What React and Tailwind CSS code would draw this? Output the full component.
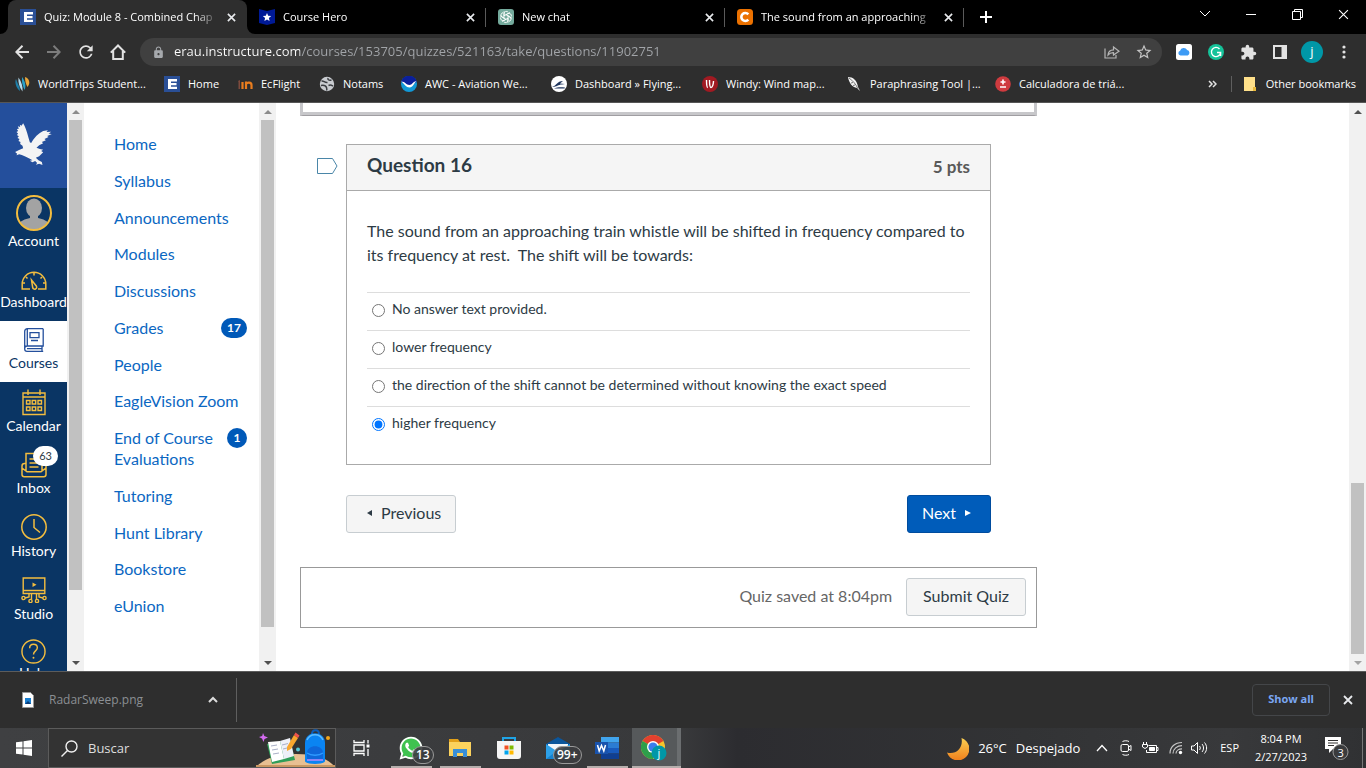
import React from "react";
import { FaWhatsapp } from "react-icons/fa";
import { MdExtension, MdLock, MdStarBorder, MdRefresh } from "react-icons/md";

const ui = "font-['Open_Sans','Noto_Sans',sans-serif]";

function Cross({ size = 10, width = 2, color = "#e8eaed" }) {
  return (
    <svg width={size} height={size} viewBox="0 0 10 10" stroke={color} strokeWidth={width} fill="none" aria-hidden="true">
      <path d="M1 1l8 8M9 1l-8 8" />
    </svg>
  );
}

function EMark() {
  return (
    <svg width="16" height="16" viewBox="0 0 16 16" className="shrink-0" aria-hidden="true">
      <rect width="16" height="16" fill="#2a4f96" />
      <path d="M4 3h9v2.4H7v1.5h5.5v2.3H7v1.5h6V13H4z" fill="#fff" />
    </svg>
  );
}

function HeroMark() {
  return (
    <svg width="16" height="16" viewBox="0 0 16 16" className="shrink-0" aria-hidden="true">
      <path d="M0 0l8 2 8-2v14l-8 2-8-2z" fill="#001a96" />
      <path d="M8 4l1.200 2.800 3 .3-2.300 2 .7 3L8 10.500l-2.600 1.600.7-3-2.300-2 3-.3z" fill="#fff" />
    </svg>
  );
}

function KnotMark() {
  return (
    <svg width="16" height="16" viewBox="0 0 32 32" className="shrink-0" aria-hidden="true">
      <rect width="32" height="32" rx="6" fill="#74aa9c" />
      <g fill="none" stroke="#fff" strokeWidth="1.7">
        {[0, 60, 120, 180, 240, 300].map((a) => (
          <path key={a} transform={`rotate(${a} 16 16)`} d="M12 19V9.500a4.800 4.800 0 0 1 8.500-3M16 11.500l8-4.500" />
        ))}
      </g>
    </svg>
  );
}

function CheggMark() {
  return (
    <svg width="16" height="16" viewBox="0 0 16 16" className="shrink-0" aria-hidden="true">
      <rect width="16" height="16" rx="3.500" fill="#eb7100" />
      <path d="M11.300 5.300A4 4 0 1 0 11.300 10.700" fill="none" stroke="#fff" strokeWidth="2.600" />
    </svg>
  );
}

const tabs = [
  { title: "Quiz: Module 8 - Combined Chap", Icon: EMark, active: true },
  { title: "Course Hero", Icon: HeroMark },
  { title: "New chat", Icon: KnotMark },
  { title: "The sound from an approaching", Icon: CheggMark },
];

function TabStrip() {
  return (
    <div className="flex h-[34px] shrink-0 items-stretch bg-black pl-2 text-xs text-white">
      <div className="flex min-w-0 flex-1" role="tablist">
        {tabs.map(({ title, Icon, active }) => (
          <div
            key={title}
            className={
              "relative flex w-[239px] min-w-0 items-center pl-3 pr-[11px] " +
              (active ? "rounded-t-lg bg-[#2e2e2e]" : "")
            }
          >
            <button role="tab" aria-selected={!!active} className="flex min-w-0 flex-1 items-center gap-2 text-left">
              <Icon />
              <span className="min-w-0 flex-1 overflow-hidden whitespace-nowrap text-[11px] [mask-image:linear-gradient(to_right,#000_calc(100%-24px),transparent)]">
                {title}
              </span>
            </button>
            <button aria-label={"Close " + title} className="ml-2 shrink-0">
              <Cross size={9} width={1.800} />
            </button>
            {active ? (
              <>
                <svg className="absolute -left-2 bottom-0" width="8" height="8" aria-hidden="true"><path d="M8 0v8H0A8 8 0 0 0 8 0" fill="#2e2e2e" /></svg>
                <svg className="absolute -right-2 bottom-0" width="8" height="8" aria-hidden="true"><path d="M0 0v8h8A8 8 0 0 1 0 0" fill="#2e2e2e" /></svg>
              </>
            ) : (
              <span className="absolute right-0 top-2 h-[19px] w-px bg-[#5a5a5a]" />
            )}
          </div>
        ))}
        <button aria-label="New tab" className="ml-4 self-center">
          <svg width="12" height="12" stroke="#fff" strokeWidth="2" aria-hidden="true"><path d="M6 0v12M0 6h12" /></svg>
        </button>
      </div>
      <div className="flex h-7 shrink-0 text-white">
        <button aria-label="Search tabs" className="flex w-[46px] items-center justify-center">
          <svg width="12" height="8" fill="none" stroke="currentColor" aria-hidden="true"><path d="M1 1l5 5 5-5" /></svg>
        </button>
        <button aria-label="Minimize" className="flex w-[46px] items-center justify-center">
          <svg width="10" height="10" fill="currentColor" aria-hidden="true"><path d="M0 5h10v1H0z" /></svg>
        </button>
        <button aria-label="Restore" className="flex w-[46px] items-center justify-center">
          <svg width="11" height="11" fill="none" stroke="currentColor" aria-hidden="true"><path d="M.5 2.500h8v8h-8zM2.500 2.500v-2h8v8h-2" /></svg>
        </button>
        <button aria-label="Close window" className="flex w-[46px] items-center justify-center">
          <Cross size={11} width={1} color="#fff" />
        </button>
      </div>
    </div>
  );
}

function Toolbar() {
  const cell = "flex w-8 shrink-0 items-center justify-center";
  return (
    <div className="flex h-9 shrink-0 items-center bg-[#2e2e2e] pl-[6px] pr-[6px] text-[#e2e2e2]">
      <button aria-label="Back" className={cell}>
        <svg width="14" height="14" fill="none" stroke="currentColor" strokeWidth="2" aria-hidden="true"><path d="M14 7H1.500M7.500.800L1.300 7l6.200 6.200" /></svg>
      </button>
      <button aria-label="Forward" className={cell + " text-[#7c7c7c]"}>
        <svg width="14" height="14" fill="none" stroke="currentColor" strokeWidth="2" aria-hidden="true"><path d="M0 7h12.500M6.500.800L12.700 7l-6.200 6.200" /></svg>
      </button>
      <button aria-label="Reload" className={cell}><MdRefresh size={20} /></button>
      <button aria-label="Home page" className={cell}>
        <svg width="16" height="16" fill="none" stroke="currentColor" strokeWidth="2" aria-hidden="true"><path d="M.8 8.600L8 1.500l7.200 7.100M3.200 7v8h9.600V7" /></svg>
      </button>
      <div className="ml-[6px] flex h-7 min-w-0 flex-1 items-center rounded-full bg-[#404040] pl-3 pr-[2px]">
        <MdLock size={13} className="mr-[9px] shrink-0 text-[#a6a9ad]" aria-hidden="true" />
        <input
          aria-label="Address and search bar"
          readOnly
          value="erau.instructure.com/courses/153705/quizzes/521163/take/questions/11902751"
          className="min-w-0 flex-1 bg-[linear-gradient(to_right,#ffffff_126px,#a2a5a9_126px)] bg-clip-text text-[13px] text-transparent outline-none"
        />
        <button aria-label="Share this page" className={cell + " text-[#b5b5b5]"}>
          <svg width="16" height="16" fill="none" stroke="currentColor" strokeWidth="1.200" aria-hidden="true"><path d="M1 4.500V14h11v-3M4 11c.3-3.500 2.500-5 5.500-5.100V3L15 7.200 9.500 11V8.700C7.300 8.600 5.500 9.200 4 11z" /></svg>
        </button>
        <button aria-label="Bookmark this page" className={cell + " text-[#c4c4c4]"}><MdStarBorder size={18} /></button>
      </div>
      <button aria-label="iCloud" className={cell + " ml-[6px]"}>
        <svg width="16" height="16" aria-hidden="true"><rect width="16" height="16" rx="2.500" fill="#fff" /><path d="M4.500 11.500a2.400 2.400 0 0 1-.4-4.700 3.800 3.800 0 0 1 7-.8 2.900 2.900 0 0 1 .6 5.500z" fill="#3d9bf5" /></svg>
      </button>
      <button aria-label="Grammarly" className={cell}>
        <svg width="16" height="16" aria-hidden="true"><circle cx="8" cy="8" r="8" fill="#15c39a" /><path d="M11.500 5A4.600 4.600 0 1 0 12.600 8.500H9M12.600 8.500v3.500" fill="none" stroke="#fff" strokeWidth="1.400" /></svg>
      </button>
      <button aria-label="Extensions" className={cell}><MdExtension size={17} /></button>
      <button aria-label="Side panel" className={cell}>
        <svg width="14" height="14" aria-hidden="true"><path fillRule="evenodd" d="M0 0h14v14H0zM2 2v10h6.500V2z" fill="currentColor" /></svg>
      </button>
      <button aria-label="Profile" className={cell}>
        <span className="flex size-[22px] items-center justify-center rounded-full bg-[#0097a7] pb-px text-[13px] leading-none text-white">j</span>
      </button>
      <button aria-label="Browser menu" className={cell}>
        <svg width="4" height="14" fill="currentColor" aria-hidden="true"><circle cx="2" cy="2" r="1.600" /><circle cx="2" cy="7" r="1.600" /><circle cx="2" cy="12" r="1.600" /></svg>
      </button>
    </div>
  );
}

function Glyph({ children }) {
  return <svg width="16" height="16" viewBox="0 0 16 16" className="shrink-0" aria-hidden="true">{children}</svg>;
}

const bookmarks = [
  { w: "w-[134px]", label: "WorldTrips Student...", icon: <Glyph><path d="M2 3c-1.500 3 0 9 4 12L5.500 11C4 8 3 6 2 3z" fill="#1f7fa8" /><path d="M4.500 1.500C4 6 5 11 8.500 15.500c.5-5-1-10-4-14z" fill="#b9dcec" /><path d="M8 1c-.5 5 .8 9 2.500 13 2-4 .5-9-2.500-13z" fill="#2aa2c9" /><path d="M11 1c0 4 .8 7 2.500 10C17 7 15 2 11 1z" fill="#e9a63a" /></Glyph> },
  { w: "w-[57px]", label: "Home", icon: <EMark /> },
  { w: "w-[66px]", label: "EcFlight", icon: <Glyph><path d="M1 5l2-1v9H1.500V6z" fill="#7d4a3d" /><path d="M5.500 6v7" fill="none" stroke="#e97d1e" strokeWidth="2.200" /><path d="M9 13V5.500M9 8c1-2 5.500-2.200 5.500 1v4" fill="none" stroke="#e97d1e" strokeWidth="2.200" /></Glyph> },
  { w: "w-[66px]", label: "Notams", icon: <Glyph><circle cx="8" cy="8" r="7.200" fill="#c9ccd0" /><path d="M2.500 5c2.500-.5 3 2 6 1.500M9 2c-.5 2 1 2.500 3.500 2M2 9.500c3-.5 5 .5 5.500 2s0 2 .5 3M9.500 9.500c2-1 3.500 0 4.500.5" stroke="#3a3d41" strokeWidth="1.500" fill="none" /></Glyph> },
  { w: "w-[134px]", label: "AWC - Aviation We...", icon: <Glyph><circle cx="8" cy="8" r="8" fill="#1298d6" /><path d="M.2 6A8 8 0 0 1 15.800 6C13 6 12 11 8.500 11S4 7 .2 6z" fill="#0b1f9c" /><path d="M.3 5.500c3.700 0 5 3.500 8 3.500s4-4 7.200-4c-2.500 2-3.500 6.500-7 6.500S3.500 8 .3 5.500z" fill="#fff" /></Glyph> },
  { w: "w-[135px]", label: "Dashboard » Flying...", icon: <Glyph><circle cx="8" cy="8" r="8" fill="#fff" /><path d="M1 11c4-1 5-6 11-6L9 7.500l5 .5-3 .5C7 8.500 6 11 1 11zM3 12.500c3-1.500 7-1.500 11-1l-.5 1z" fill="#1f355e" /></Glyph> },
  { w: "w-[128px]", label: "Windy: Wind map...", icon: <Glyph><circle cx="8" cy="8" r="8" fill="#a11a22" /><path d="M4.500 4c0 5 .3 7.500 1.300 7.500M7.500 4c0 4 .3 7.500 1.500 7.500 1.500 0 2.500-3.500 2.500-6.500" fill="none" stroke="#fff" strokeWidth="1.400" /></Glyph> },
  { w: "w-[133px]", label: "Paraphrasing Tool |...", icon: <Glyph><path d="M2 1c5 0 9 3 10 10l2 4-3-3C6 11 3 7 2 1z" fill="#f3f3f3" /><path d="M3 2c4 3 7 6 9 11M5 7l2-.5M7 9.500l2-.5" stroke="#777" fill="none" /></Glyph> },
  { w: "w-[133px]", label: "Calculadora de triá...", icon: <Glyph><circle cx="8" cy="8" r="7.800" fill="#cf3b3f" /><path d="M8 3.500v5M5.500 6h5M5 11h6" stroke="#fff" strokeWidth="1.600" /></Glyph> },
];

function BookmarksBar() {
  return (
    <nav aria-label="Bookmarks" className="flex h-[33px] shrink-0 items-center border-b border-[#565656] bg-[#2e2e2e] pb-1 pl-[14px] pr-[10px] text-[11px] text-white">
      <div className="flex h-full min-w-0 flex-1 items-center gap-4 overflow-hidden">
        {bookmarks.map((b) => (
          <a key={b.label} href="#" className={"flex shrink-0 items-center gap-2 whitespace-nowrap " + b.w}>
            {b.icon}
            {b.label}
          </a>
        ))}
      </div>
      <button aria-label="More bookmarks" className="mr-[14px]">
        <svg width="9" height="8" fill="none" stroke="#e2e2e2" strokeWidth="1.500" aria-hidden="true"><path d="M1 1l3 3-3 3M5 1l3 3-3 3" /></svg>
      </button>
      <span className="mr-3 h-4 w-px bg-[#5f5f5f]" />
      <a href="#" className="flex items-center gap-[10px] whitespace-nowrap">
        <svg width="12" height="14" aria-hidden="true"><path d="M0 0h11v10h1v4H0z" fill="#ffe08a" /><path d="M9 10h3v4H9z" fill="#e9b93c" /></svg>
        Other bookmarks
      </a>
    </nav>
  );
}

function ScrollTrack({ thumb, up = "#8b8b8b", down = "#505050" }) {
  return (
    <div className="flex w-[17px] shrink-0 flex-col items-center bg-[#f1f1f1]" aria-hidden="true">
      <span className="flex h-[17px] items-center"><svg width="8" height="4"><path d="M4 0l4 4H0z" fill={up} /></svg></span>
      <div className="flex min-h-0 w-full flex-1 flex-col px-[2px]">{thumb}</div>
      <span className="flex h-[17px] items-center"><svg width="8" height="4"><path d="M0 0h8L4 4z" fill={down} /></svg></span>
    </div>
  );
}

const gold = "#f3bd3f";
const globalNav = [
  {
    label: "Account", box: "h-[37px]",
    icon: (
      <svg width="36" height="36" viewBox="0 0 36 36" aria-hidden="true">
        <circle cx="18" cy="18" r="17" fill="#0a3564" />
        <clipPath id="face"><circle cx="18" cy="18" r="16.500" /></clipPath>
        <g clipPath="url(#face)" fill="#a3a3a3"><ellipse cx="18" cy="13" rx="8" ry="9.500" /><path d="M14 19h8v4c5 1 10 3 12 7v6H2v-6c2-4 7-6 12-7z" /></g>
        <circle cx="18" cy="18" r="17" fill="none" stroke={gold} strokeWidth="2" />
      </svg>
    ),
  },
  {
    label: "Dashboard", box: "h-[26px] pt-1",
    icon: (
      <svg width="26" height="20" viewBox="0 0 26 20" fill="none" stroke={gold} strokeWidth="1.500" aria-hidden="true">
        <path d="M9 18H1.200v-5a11.800 11.800 0 0 1 23.600 0v5H17M13 2v2.500M5 6l1.500 1.500M21 6l-1.500 1.500M1.500 12H4M22 12h2.500M10.500 9l4.800 6a2 2 0 1 1-3.600 1.500z" />
      </svg>
    ),
  },
  {
    label: "Courses", active: true, box: "h-[26px]",
    icon: (
      <svg width="20" height="24" viewBox="0 0 20 24" fill="none" stroke="#244f9c" strokeWidth="1.300" aria-hidden="true">
        <path d="M19.200.700H3.500C1.700.700.700 1.700.700 3.500V21c0 1.500 1 2.300 2.300 2.300h16.200M19.200.700V18H3c-1.400 0-2.300 1-2.300 2.500M3.300.700V18M3 20.600h15M18 18v5M6 4.700h9v5H6zM7 12.500h7" />
      </svg>
    ),
  },
  {
    label: "Calendar", box: "h-7",
    icon: (
      <svg width="24" height="27" viewBox="0 0 24 27" fill="none" stroke={gold} strokeWidth="1.400" aria-hidden="true">
        <path d="M1 4h22v21.500H1zM1 8h22M6 .5V6M18 .5V6M4.500 11.500h3.500v3.500H4.500zM10.200 11.500h3.500v3.500h-3.500zM16 11.500h3.500v3.500H16zM4.500 18h3.500v3.500H4.500zM10.200 18h3.500v3.500h-3.500zM16 18h3.500v3.500H16z" />
      </svg>
    ),
  },
  {
    label: "Inbox", badge: "63", box: "h-[27px]",
    icon: (
      <svg width="26" height="26" viewBox="0 0 26 26" fill="none" stroke={gold} strokeWidth="1.500" aria-hidden="true">
        <path d="M5 11.500H3.500C2 11.500 1 12.500 1 14v8.500c0 1.400.8 2.200 2.200 2.200h19.600c1.400 0 2.200-.8 2.200-2.200V14c0-1.500-1-2.500-2.500-2.500H21M5 18.500V1.500h16v17M1 16l5 3.800h14L25 16M8.500 7h9M8.500 11h9M8.500 15h9" />
      </svg>
    ),
  },
  {
    label: "History", box: "h-7",
    icon: (
      <svg width="26" height="26" viewBox="0 0 26 26" fill="none" stroke={gold} strokeWidth="1.500" aria-hidden="true"><circle cx="13" cy="13" r="12.200" /><path d="M13 5v8.500l6 5" /></svg>
    ),
  },
  {
    label: "Studio", box: "h-7",
    icon: (
      <svg width="26" height="26" viewBox="0 0 26 26" fill="none" stroke={gold} strokeWidth="1.400" aria-hidden="true">
        <path d="M2.200 1h21.600v15.500H2.200zM2.200 13.500h21.600M8 16.500V20l-4 1M10.500 16.500V22M15.500 16.500V22M18 16.500V20l4 1" /><path d="M11.500 5.500l4 2.200-4 2.200z" fill={gold} stroke="none" />
        <circle cx="2.500" cy="21" r="1.600" /><circle cx="9.500" cy="24" r="1.600" /><circle cx="16" cy="24" r="1.600" /><circle cx="23.500" cy="21" r="1.600" />
      </svg>
    ),
  },
  {
    label: "Help", box: "h-6",
    icon: (
      <svg width="25" height="25" viewBox="0 0 26 26" fill="none" stroke={gold} strokeWidth="1.500" aria-hidden="true"><circle cx="13" cy="13" r="12" /><path d="M9 9.500c0-2.400 1.600-4 4-4s4 1.500 4 3.700c0 3.300-4 3-4 6.800" /><circle cx="13" cy="19.500" r="1" fill={gold} stroke="none" /></svg>
    ),
  },
];

function GlobalNav() {
  return (
    <nav aria-label="Global" className="flex w-[67px] shrink-0 flex-col overflow-hidden bg-[#0a3564] font-[Lato,sans-serif] text-sm text-white">
      <a href="#" aria-label="University home" className="flex h-[85px] shrink-0 justify-center bg-[#244f9c] pt-5">
        <svg width="37" height="42" viewBox="0 0 110 126" fill="#f4f4f4" aria-hidden="true">
          <path d="M24 1L19 8 14 5 15 12 8 10 11 17 5 18 9 24 4 27 9 32 5 36 11 40 7 45 13 48 10 54 16 57 15 63 22 68 24 76 10 82 0 87 6 92 4 97 12 94 20 96 32 101 44 107 52 112 44 113 52 118 60 114 66 120 62 125 72 122 82 126 80 117 70 112 62 104 72 100 84 88 78 84 84 80 74 78 64 74 72 67 84 61 80 57 92 52 88 48 100 42 96 39 110 33 100 32 108 26 94 27 98 22 84 24 74 30 64 38 54 50 48 60 44 58 40 44 36 30 32 18 28 8z" />
        </svg>
      </a>
      {globalNav.map((n) => (
        <a
          key={n.label}
          href="#"
          className={
            "relative flex shrink-0 flex-col items-center pt-[6px] pb-[9px] leading-5 " +
            (n.active ? "bg-white text-[#0a3564]" : "")
          }
        >
          <span className={"flex items-center justify-center " + n.box}>{n.icon}</span>
          {n.badge && (
            <span className="absolute right-[9px] top-px rounded-full bg-white px-[6px] text-[11px] leading-5 text-[#2d3b45]">{n.badge}</span>
          )}
          {n.label}
        </a>
      ))}
    </nav>
  );
}

const courseLinks = [
  ["Home"], ["Syllabus"], ["Announcements"], ["Modules"], ["Discussions"], ["Grades", "17"], ["People"],
  ["EagleVision Zoom"], ["End of Course Evaluations", "1"], ["Tutoring"], ["Hunt Library"], ["Bookstore"], ["eUnion"],
];

function CourseNav() {
  return (
    <nav aria-label="Course" className="w-[175px] shrink-0 overflow-hidden pl-[30px] pr-3 pt-[30px] font-[Lato,sans-serif] text-base leading-[21px] text-[#0b67c2]">
      <ul className="flex h-[483px] flex-col justify-between">
        {courseLinks.map(([label, count]) => (
          <li key={label}>
            <a href="#" className="flex items-start justify-between">
              <span>{label}</span>
              {count && (
                <span className="mt-px min-w-5 shrink-0 rounded-full bg-[#0059b8] px-[6px] text-center text-xs font-bold leading-5 text-white">{count}</span>
              )}
            </a>
          </li>
        ))}
      </ul>
    </nav>
  );
}

const answers = [
  "No answer text provided.",
  "lower frequency",
  "the direction of the shift cannot be determined without knowing the exact speed",
  "higher frequency",
];

function Quiz() {
  const grey = "h-[38px] rounded-[3px] border border-[#c7cdd1] bg-[#f5f5f5] pb-[2px] text-[#2d3b45]";
  return (
    <main className="min-w-0 flex-1 overflow-hidden bg-white pl-6 pr-6 font-[Lato,sans-serif] text-base text-[#2d3b45]">
      <div className="max-w-[737px]">
        <div className="h-[13px] border-x-[3px] border-b border-x-[#c7c7ca] border-b-[#a09ea2]">
          <div className="h-full border-b-[3px] border-[#c7c7ca]" />
        </div>
        <div className="mt-7 flex items-start pr-[46px]">
          <button aria-label="Flag question" className="ml-[17px] mr-2 mt-[14px] shrink-0">
            <svg width="21" height="16" fill="#fff" stroke="#4a86a8" aria-hidden="true"><path d="M.5.500h15L20 8l-4.500 7.500H.5z" /></svg>
          </button>
          <section className="min-w-0 flex-1 border border-[#aaa]">
            <header className="flex h-[46px] items-center justify-between border-b border-[#aaa] bg-[#f5f5f5] px-5 pb-[2px] font-bold">
              <h2 className="pb-1 text-[19px] leading-6">Question 16</h2>
              <span className="text-[17px] leading-6 text-[#595959]">5 pts</span>
            </header>
            <div className="px-5 pb-[20px] pt-7">
              <p className="leading-6">
                The sound from an approaching train whistle will be shifted in frequency compared to its frequency at rest.&nbsp; The shift will be towards:
              </p>
              <fieldset aria-label="Question 16 answers" className="mt-[25px]">
                {answers.map((a, i) => (
                  <div key={a} className="flex h-[38px] items-start border-t border-[#ddd] pl-[5px] pt-[6px] text-sm">
                    <input id={"answer-" + i} type="radio" name="answer" defaultChecked={i === 3} className="mt-[5px] size-[13px] accent-[#0075ff]" />
                    <label htmlFor={"answer-" + i} className="pl-[7px] leading-5">{a}</label>
                  </div>
                ))}
              </fieldset>
            </div>
          </section>
        </div>
        <div className="mt-[30px] flex justify-between pl-[46px] pr-[46px]">
          <button className={grey + " flex items-center gap-[9px] pl-5 pr-[14px]"}>
            <svg width="5" height="6" fill="currentColor" aria-hidden="true"><path d="M5 0v6L0 3z" /></svg>
            Previous
          </button>
          <button className="flex h-[38px] items-center gap-[9px] rounded-[3px] border border-[#004c9e] bg-[#005cba] pb-[2px] pl-[14px] pr-[19px] text-white">
            Next
            <svg width="6" height="6" fill="currentColor" aria-hidden="true"><path d="M0 0v6l6-3z" /></svg>
          </button>
        </div>
        <div className="mt-[34px] flex h-[61px] items-center justify-end gap-[14px] border border-[#999] pb-[2px] pr-[10px]">
          <span className="pb-[2px] text-[#666]">Quiz saved at 8:04pm</span>
          <button className={grey + " px-4"}>Submit Quiz</button>
        </div>
      </div>
    </main>
  );
}

function DownloadShelf() {
  return (
    <div className="flex h-[57px] shrink-0 items-center border-t border-[#5c5c5c] bg-[#2e2e2e] pb-px pr-[13px] text-xs">
      <div className="flex h-11 w-[237px] items-center border-r border-[#5f5f5f] pl-[22px] pr-[18px]">
        <svg width="12" height="16" aria-hidden="true"><path d="M.5.500h8l3 3v12H.5z" fill="#fff" stroke="#999" /><path d="M3 6h6v6H3z" fill="#1a7fd0" /><path d="M3 12l3-3 3 3z" fill="#0b3c78" /></svg>
        <span className="ml-[15px] flex-1 text-[#8b8f93]">RadarSweep.png</span>
        <button aria-label="Download options"><svg width="10" height="7" fill="none" stroke="#ddd" strokeWidth="2" aria-hidden="true"><path d="M1 6l4-4 4 4" /></svg></button>
      </div>
      <button className="ml-auto h-8 w-[78px] rounded border border-[#444649] text-[11px] font-bold text-[#7ba7f3]">Show all</button>
      <button aria-label="Close downloads bar" className="ml-[13px]"><Cross size={10} width={1.800} /></button>
    </div>
  );
}

function SearchArt() {
  return (
    <svg width="79" height="38" viewBox="0 0 79 38" className="shrink-0 self-end" aria-hidden="true">
      <path d="M0 38c8-8 20-13 40-13s31 4 39 13z" fill="#e8bf92" /><path d="M0 36h79v2H0z" fill="#c99761" />
      <path d="M7 4l1.300 3L12 8.500 8.500 10 7.500 13 6 9.500 3 8l3.200-1z" fill="#d56bf2" />
      <path d="M11 15l23-4 5 20-23 4z" fill="#2f9e58" /><path d="M12 13l12-1 4 18-12 3z" fill="#fff" /><path d="M24 12l10-3 4 18-10 3z" fill="#eef0f8" />
      <path d="M15 17l6-1M16 21l6-1M17 25l6-1M26 16l6-1.500M27 20l6-1.500" stroke="#a9afc7" />
      <path d="M31 18l7-12 4 3-7 11-4 2z" fill="#f8a62e" /><path d="M38 6l1.500-2.500 4 3L42 9z" fill="#f0534c" />
      <circle cx="42" cy="20.500" r="2" fill="#55c9d8" /><circle cx="72" cy="9" r="2" fill="#f2a518" />
      <path d="M56 5c0-5 7-5 7 0" fill="none" stroke="#0b5bb8" strokeWidth="2" />
      <path d="M49 32V14c0-13 20-13 20 0v18c0 4-20 4-20 0z" fill="#0a84f2" /><path d="M51 11c3-7 13-7 16 0" fill="none" stroke="#5cbcff" strokeWidth="1.500" />
      <path d="M51 31v-7c0-9 16-9 16 0v7z" fill="#0e67da" /><path d="M51 24c4 3 12 3 16 0" stroke="#2f9bff" strokeWidth="1.500" fill="none" /><path d="M51 31h16" stroke="#b48bff" strokeWidth="1.500" />
    </svg>
  );
}

const apps = [
  {
    label: "WhatsApp", open: true, badge: "13", badgeClass: "left-[25px]",
    icon: <span className="flex size-[22px] items-center justify-center rounded-full bg-[#3fc250]"><FaWhatsapp size={26} color="#fff" className="shrink-0" /></span>,
  },
  {
    label: "File Explorer", open: true,
    icon: <svg width="22" height="20" aria-hidden="true"><path d="M0 1h9l2 3h10v4H0z" fill="#e2a019" /><path d="M0 4h22v14H0z" fill="#fbd25d" /><path d="M4 19v-8h14v8h-4v-4H8v4z" fill="#3a8fd6" /></svg>,
  },
  {
    label: "Microsoft Store",
    icon: <svg width="24" height="24" aria-hidden="true"><path d="M6 7V2h12v5" fill="none" stroke="#1fa4e6" strokeWidth="2" /><path d="M0 5h24v15a3 3 0 0 1-3 3H3a3 3 0 0 1-3-3z" fill="#f5f5f5" /><path d="M7.500 9.500h4v4h-4z" fill="#f25022" /><path d="M12.500 9.500h4v4h-4z" fill="#7fba00" /><path d="M7.500 14.500h4v4h-4z" fill="#00a4ef" /><path d="M12.500 14.500h4v4h-4z" fill="#ffb900" /></svg>,
  },
  {
    label: "Mail", badge: "99+", badgeClass: "left-[19px]",
    icon: <svg width="24" height="24" aria-hidden="true"><path d="M0 8l12-7 12 7v4H0z" fill="#0b569c" /><path d="M2 8h20v8H2z" fill="#f2f6fa" /><path d="M0 8l12 8 12-8v15H0z" fill="#2da0e8" /><path d="M0 23l12-9 12 9z" fill="#1683d0" /></svg>,
  },
  {
    label: "Word", open: true,
    icon: <svg width="24" height="22" aria-hidden="true"><path d="M6 0h18v5.500H6z" fill="#41a5ee" /><path d="M6 5.500h18V11H6z" fill="#2b7cd3" /><path d="M6 11h18v5.500H6z" fill="#185abd" /><path d="M6 16.500h18V22H6z" fill="#103f91" /><path d="M0 5h13v12H0z" fill="#1953ad" /><path d="M2.500 8l1.700 6L6.500 8.500 8.800 14l1.700-6" fill="none" stroke="#fff" strokeWidth="1.500" /></svg>,
  },
  {
    label: "Chrome", open: true, active: true,
    icon: (
      <svg width="26" height="26" viewBox="0 0 26 26" aria-hidden="true">
        <circle cx="12" cy="12" r="12" fill="#f6c42c" /><path d="M12 12L1.600 6a12 12 0 0 1 20.800 0z" fill="#e2402f" /><path d="M12 12L1.600 6A12 12 0 0 0 12 24l5-9z" fill="#2e9e4b" />
        <circle cx="12" cy="12" r="6" fill="#fff" /><circle cx="12" cy="12" r="4.600" fill="#3b7ded" /><circle cx="18" cy="18" r="7.500" fill="#0097a7" />
        <text x="16.500" y="22" fontSize="11" fill="#fff" fontFamily="Open Sans, sans-serif">j</text>
      </svg>
    ),
  },
];

function Taskbar() {
  return (
    <div className="flex h-10 shrink-0 items-stretch bg-[linear-gradient(to_right,#3f4042,#38393b_50%,#2c2c30_54%,#323335_75%,#38393b_90%,#303133)] text-white">
      <button aria-label="Start" className="flex w-12 shrink-0 items-center justify-center">
        <svg width="16" height="16" fill="#fff" aria-hidden="true"><path d="M0 2.300L6.500 1.400v6.100H0zM7.500 1.200L16 0v7.500H7.500zM0 8.500h6.500v6.100L0 13.700zM7.500 8.500H16V16l-8.500-1.200z" /></svg>
      </button>
      <label className="flex w-72 shrink-0 items-center overflow-hidden border border-[#5b5b5b] bg-[#333] pl-3">
        <svg width="17" height="17" fill="none" stroke="#f0f0f0" strokeWidth="1.400" className="shrink-0" aria-hidden="true"><circle cx="10.500" cy="6.500" r="5.500" /><path d="M6.500 10.500L.5 16.500" /></svg>
        <input aria-label="Buscar" placeholder="Buscar" className="ml-[10px] min-w-0 flex-1 bg-transparent pt-[2px] text-[13px] text-white outline-none placeholder:text-[#dedede]" />
        <SearchArt />
      </label>
      <button aria-label="Task view" className="flex w-[51px] shrink-0 items-center justify-center">
        <svg width="17" height="16" fill="none" stroke="#fff" strokeWidth="1.300" aria-hidden="true"><path d="M1 0v2.500h10V0M1 16v-2.500h10V16M1 5h10v6H1zM15 0v3.500M15 9v7" /><path d="M13.500 4.500h3v3h-3z" fill="#fff" stroke="none" /></svg>
      </button>
      {apps.map((a) => (
        <button
          key={a.label}
          aria-label={a.label}
          className={
            "relative flex w-[49px] shrink-0 items-center justify-center pr-px " +
            (a.active ? "border-r-4 border-[#6b6e70] bg-[#56595b] " : "")
          }
        >
          {a.icon}
          {a.badge && (
            <span className={"absolute top-[18px] rounded-full border border-[#9a9a9a] bg-[#3c3d3f]/90 px-[3px] text-xs font-semibold leading-4 " + a.badgeClass}>{a.badge}</span>
          )}
          {a.open && <span className={"absolute bottom-0 h-[2px] bg-[#b5aeac] " + (a.active ? "-right-1 left-0" : "inset-x-1")} />}
        </button>
      ))}
      <div className="ml-auto flex items-center">
        <button className="flex items-center whitespace-nowrap pt-px text-[13px]">
          <svg width="22" height="22" className="mr-[9px]" aria-hidden="true"><defs><linearGradient id="moon" x1="0" y1="0" x2="0" y2="1"><stop offset="0" stopColor="#f9cf52" /><stop offset="1" stopColor="#f0801c" /></linearGradient></defs><path d="M14.500 0A11.500 11.500 0 1 1 0 14.500C9 17 16.500 10 14.500 0z" fill="url(#moon)" /></svg>
          <span>26°C</span>
          <span className="ml-[9px]">Despejado</span>
        </button>
        <button aria-label="Show hidden icons" className="ml-4"><svg width="12" height="8" fill="none" stroke="#fff" strokeWidth="1.300" aria-hidden="true"><path d="M1 7l5-5.500L11 7" /></svg></button>
        <button aria-label="Meet now" className="ml-3"><svg width="12" height="16" fill="none" stroke="#fff" aria-hidden="true"><rect x="1" y="4.500" width="7.500" height="7" rx="1.500" /><path d="M8.500 7l2.500-1.500v5L8.500 9M2.500 1.500c2-1 4.500-1 6.500 0M2.500 14.500c2 1 4.500 1 6.500 0" /></svg></button>
        <button aria-label="Battery" className="ml-[10px]"><svg width="17" height="13" fill="none" stroke="#fff" aria-hidden="true"><path d="M6.500 3.500h8v7h-10V8M14.500 5.500h1.500v3h-1.500" /><path d="M7.500 5.500h5v3h-5z" fill="#fff" /><path d="M1.500 0v2.500M4.500 0v2.500M.5 2.500h5V5L3 6.500.5 5z" /></svg></button>
        <button aria-label="Network" className="ml-[10px]"><svg width="14" height="14" fill="none" stroke="#c8c8c8" strokeWidth="1.200" aria-hidden="true"><path d="M1 12.500C1 6 6 1.500 13 1.500M4 12.500c0-4.500 4-7.800 9-7.800M7 12.500c0-2.800 2.600-4.600 6-4.600" /><circle cx="11.500" cy="11.500" r="1.700" fill="#fff" stroke="none" /></svg></button>
        <button aria-label="Volume" className="ml-2"><svg width="17" height="14" fill="none" stroke="#fff" aria-hidden="true"><path d="M.5 5h2.500l3.500-3.500v11L3 9H.5zM8.500 5c1 1.200 1 2.800 0 4M11 3c2 2.300 2 5.700 0 8M13.500 1.500c2.800 3.200 2.800 7.800 0 11" /></svg></button>
        <button className="ml-3 text-[11px]">ESP</button>
        <div className="ml-[14px] w-14 text-center text-[11px] leading-[18px]">
          <div>8:04 PM</div>
          <div>2/27/2023</div>
        </div>
        <button aria-label="Notifications, 3 new" className="ml-4 mr-3">
          <svg width="25" height="24" aria-hidden="true"><path d="M0 1h16v12H8l-4 4v-4H0z" fill="#fff" /><path d="M3 4.500h10M3 7h10M3 9.500h6" stroke="#333" /><circle cx="15.500" cy="16" r="7.500" fill="#3a3b3d" stroke="#999" /><text x="12.500" y="20.500" fontSize="11" fill="#fff" fontFamily="Open Sans, sans-serif">3</text></svg>
        </button>
        <span className="mr-[3px] h-10 w-px bg-[#777]" />
      </div>
    </div>
  );
}

export default function App() {
  return (
    <div className={"flex h-screen flex-col overflow-hidden bg-white " + ui}>
      <TabStrip />
      <Toolbar />
      <BookmarksBar />
      <div className="flex min-h-0 flex-1">
        <GlobalNav />
        <ScrollTrack thumb={<span className="h-[88%] bg-[#c1c1c1]" />} />
        <CourseNav />
        <ScrollTrack thumb={<span className="h-[95%] bg-[#c1c1c1]" />} />
        <Quiz />
        <ScrollTrack thumb={<span className="mt-auto h-[32%] bg-[#c1c1c1]" />} up="#505050" down="#a3a3a3" />
      </div>
      <DownloadShelf />
      <Taskbar />
    </div>
  );
}
